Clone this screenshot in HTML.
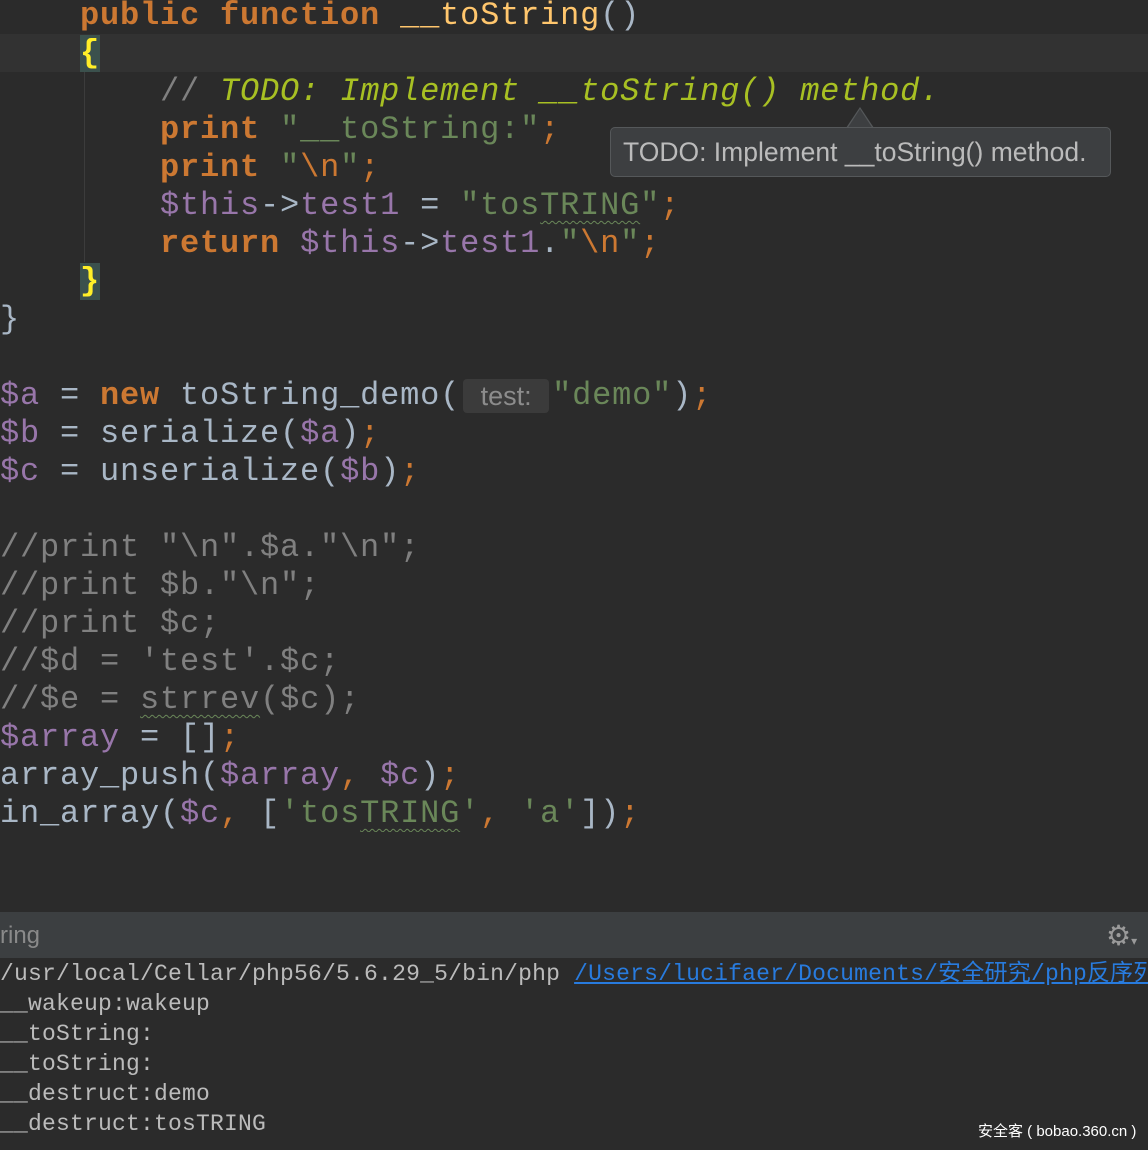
<!DOCTYPE html>
<html><head><meta charset="utf-8"><style>
*{margin:0;padding:0;box-sizing:border-box}
body{width:1148px;height:1150px;overflow:hidden;background:#2b2b2b;position:relative;font-family:"Liberation Mono","Noto Sans CJK SC",monospace}
.ed{position:absolute;left:0;top:0;width:1148px;height:832px;background:#2b2b2b}
.cur{position:absolute;left:0;top:34px;width:1148px;height:38px;background:#323232}
.l{position:absolute;left:0;height:38px;line-height:38px;font-size:32px;letter-spacing:0.8px;color:#a9b7c6;white-space:pre}
.k{color:#cc7832;font-weight:bold}
.s{color:#6a8759}
.v{color:#9876aa}
.c{color:#808080}
.t{color:#a8c023;font-style:italic}
.f{color:#ffc66d}
.o{color:#cc7832}
.br{background:#3b514d;color:#ffef28;font-weight:bold}
.sq{text-decoration:underline wavy #6a8759;text-decoration-thickness:1px;text-underline-offset:6px}
.hint{display:inline-block;background:#3b3b3b;color:#8c8c8c;font-family:"Liberation Sans",sans-serif;font-size:27px;letter-spacing:0;width:86px;height:34px;line-height:34px;text-align:center;border-radius:4px;vertical-align:top;margin:2px 3px 0 3px}
.guide{position:absolute;left:84px;top:72px;width:1px;height:190px;background:#3c3c3c}
.tip{position:absolute;left:610px;top:127px;width:501px;height:50px;background:#3d3f41;border:1px solid #55585a;border-radius:5px;color:#bbbbbb;font-family:"Liberation Sans",sans-serif;font-size:26.5px;line-height:48px;padding-left:12px;white-space:nowrap}
.arr{position:absolute;left:846px;top:107px;width:0;height:0;border-left:14px solid transparent;border-right:14px solid transparent;border-bottom:21px solid #55585a}
.arr2{position:absolute;left:847px;top:109px;width:0;height:0;border-left:13px solid transparent;border-right:13px solid transparent;border-bottom:20px solid #3d3f41}
.gap{position:absolute;left:0;top:832px;width:1148px;height:80px;background:#2b2b2b}
.hdr{position:absolute;left:0;top:912px;width:1148px;height:46px;background:#3c3f41;color:#8a8a8a;font-family:"Liberation Sans",sans-serif;font-size:24px;line-height:48px}
.con{position:absolute;left:0;top:958px;width:1148px;height:192px;background:#2b2b2b}
.cl{position:absolute;left:0;height:30px;line-height:30px;font-size:23px;color:#bbbbbb;white-space:pre;letter-spacing:0.2px}
.lk{color:#287bde;text-decoration:underline}
.wm{position:absolute;left:978px;top:1120px;color:#fff;font-family:"Liberation Sans","Noto Sans CJK SC",sans-serif;font-size:15px}
</style></head><body>
<div class="ed"></div>
<div class="cur"></div>
<div class="guide"></div>
<div class="l" style="top:-3px">    <span class="k">public function</span> <span class="f">__toString</span>()</div>
<div class="l" style="top:35px">    <span class="br">{</span></div>
<div class="l" style="top:73px">        <span class="c">// </span><span class="t">TODO: Implement __toString() method.</span></div>
<div class="l" style="top:111px">        <span class="k">print</span> <span class="s">"__toString:"</span><span class="o">;</span></div>
<div class="l" style="top:149px">        <span class="k">print</span> <span class="s">"</span><span class="o">\n</span><span class="s">"</span><span class="o">;</span></div>
<div class="l" style="top:187px">        <span class="v">$this</span>-><span class="v">test1</span> = <span class="s">"tos<span class="sq">TRING</span>"</span><span class="o">;</span></div>
<div class="l" style="top:225px">        <span class="k">return</span> <span class="v">$this</span>-><span class="v">test1</span>.<span class="s">"</span><span class="o">\n</span><span class="s">"</span><span class="o">;</span></div>
<div class="l" style="top:263px">    <span class="br">}</span></div>
<div class="l" style="top:301px">}</div>
<div class="l" style="top:377px"><span class="v">$a</span> = <span class="k">new</span> toString_demo(<span class="hint">test:</span><span class="s">"demo"</span>)<span class="o">;</span></div>
<div class="l" style="top:415px"><span class="v">$b</span> = serialize(<span class="v">$a</span>)<span class="o">;</span></div>
<div class="l" style="top:453px"><span class="v">$c</span> = unserialize(<span class="v">$b</span>)<span class="o">;</span></div>
<div class="l c" style="top:529px">//print "\n".$a."\n";</div>
<div class="l c" style="top:567px">//print $b."\n";</div>
<div class="l c" style="top:605px">//print $c;</div>
<div class="l c" style="top:643px">//$d = 'test'.$c;</div>
<div class="l c" style="top:681px">//$e = <span class="sq">strrev</span>($c);</div>
<div class="l" style="top:719px"><span class="v">$array</span> = []<span class="o">;</span></div>
<div class="l" style="top:757px">array_push(<span class="v">$array</span><span class="o">,</span> <span class="v">$c</span>)<span class="o">;</span></div>
<div class="l" style="top:795px">in_array(<span class="v">$c</span><span class="o">,</span> [<span class="s">'tos<span class="sq">TRING</span>'</span><span class="o">,</span> <span class="s">'a'</span>])<span class="o">;</span></div>
<div class="arr"></div><div class="arr2"></div>
<div class="tip">TODO: Implement __toString() method.</div>
<div class="gap"></div>
<div class="hdr">ring<span style="position:absolute;left:1106px;top:0;color:#9a9a9a;font-size:28px">⚙<span style="font-size:12px">▾</span></span></div>
<div class="con"></div>
<div class="cl" style="top:959px">/usr/local/Cellar/php56/5.6.29_5/bin/php <span class="lk">/Users/lucifaer/Documents/安全研究/php反序列</span></div>
<div class="cl" style="top:989px">__wakeup:wakeup</div>
<div class="cl" style="top:1019px">__toString:</div>
<div class="cl" style="top:1049px">__toString:</div>
<div class="cl" style="top:1079px">__destruct:demo</div>
<div class="cl" style="top:1109px">__destruct:tosTRING</div>
<div class="wm">安全客 ( bobao.360.cn )</div>
</body></html>
